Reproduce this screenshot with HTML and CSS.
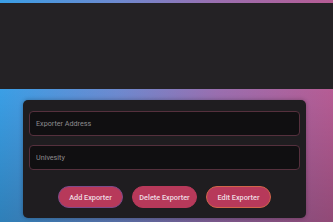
FILE: index.html
```html
<!DOCTYPE html>
<html lang="en">

<head>
  <meta charset="UTF-8" />
  <meta name="viewport" content="width=device-width, initial-scale=1.0" />
  <title>Exporters</title>
  <link rel="stylesheet" href="styles.css">
</head>

<body>
  <div class="topbar"></div>

  <div class="card">
    <!-- Inputs -->
    <input type="text" class="field" placeholder="Exporter Address">
    <input type="text" class="field" placeholder="Univesity">

    <!-- Buttons -->
    <div class="actions">
      <button class="btn btn-add">Add Exporter</button>
      <button class="btn btn-delete">Delete Exporter</button>
      <button class="btn btn-edit">Edit Exporter</button>
    </div>
  </div>
</body>

</html>
```

FILE: styles.css
```css
html, body {
  height: 100%;
}

body {
  margin: 0;
  padding-top: 3px;
  box-sizing: border-box;
  font-family: Roboto, "Liberation Sans", sans-serif;
  background:
    linear-gradient(to bottom, rgba(0, 0, 0, 0) 40%, rgba(0, 0, 0, 0.2) 100%),
    linear-gradient(to right, #3a9fe6 0%, #6d8ad0 35%, #9a6fb0 65%, #b65c94 100%);
  overflow: hidden;
}

.topbar {
  height: 86px;
  background: #242225;
}

.card {
  width: 283px;
  margin: 11px 0 0 23px;
  padding: 11px 6px 10px;
  box-sizing: border-box;
  background: #1f1d20;
  border-radius: 5px;
  box-shadow: 0 0 4px rgba(0, 0, 0, 0.3);
}

.field {
  display: block;
  width: 100%;
  height: 25px;
  margin: 0 0 9px;
  padding: 0 6px;
  box-sizing: border-box;
  background: #100f11;
  border: 1px solid #55303d;
  border-radius: 4px;
  color: #ddd;
  font-family: inherit;
  font-size: 7.2px;
  outline: none;
}

.field::placeholder {
  color: #8e8c8f;
}

.actions {
  display: flex;
  justify-content: center;
  gap: 9px;
  margin-top: 16px;
}

.btn {
  width: 65px;
  height: 22px;
  padding: 0;
  border: 1px solid #b7395a;
  border-radius: 11px;
  background: #b7395a;
  color: #f0dde2;
  font-family: inherit;
  font-size: 7.3px;
  font-weight: 500;
  cursor: pointer;
}

.btn-add {
  border-color: #7d4a8a;
}

.btn-edit {
  border-color: #d0654a;
}
```
